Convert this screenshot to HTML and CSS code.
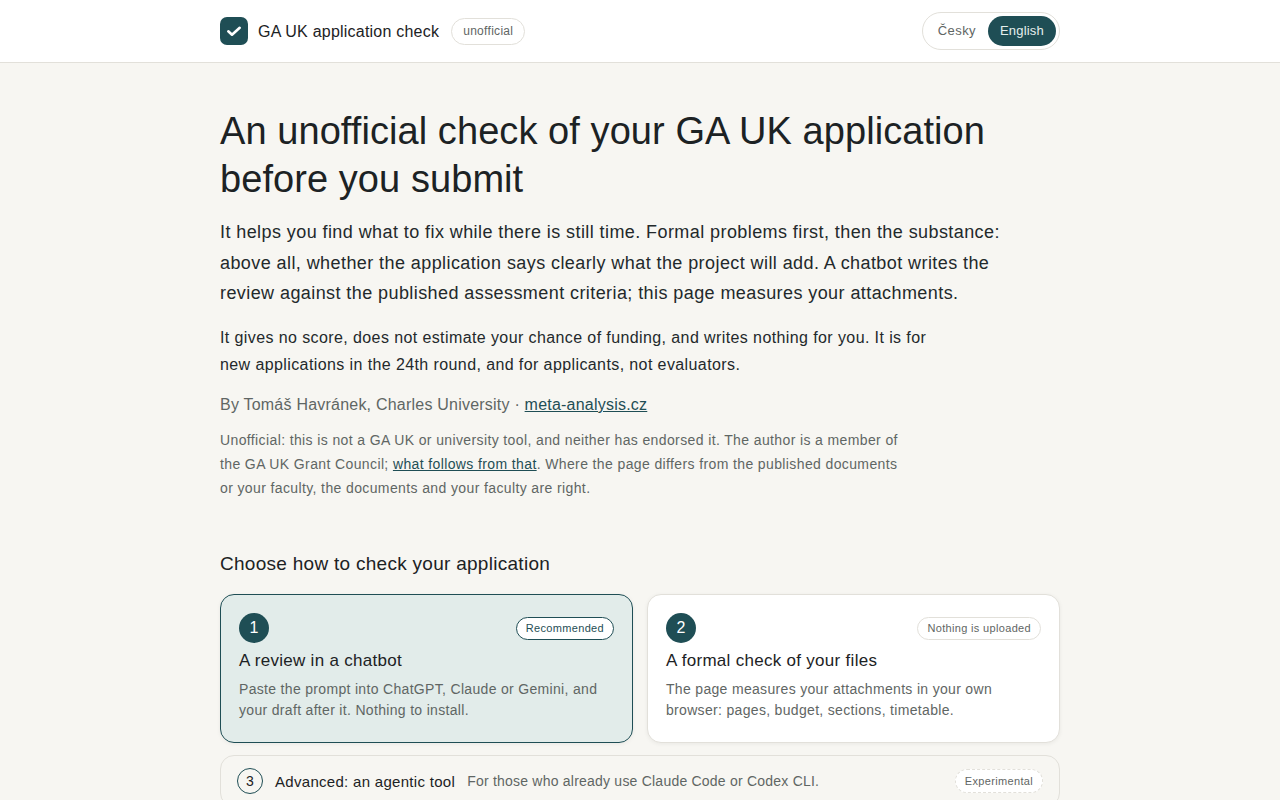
FILE: index.html
```html
<!DOCTYPE html>
<html lang="en">
<head>
    <meta charset="UTF-8">
    <meta name="viewport" content="width=device-width, initial-scale=1.0">
    <title>GA UK application check</title>
    <link rel="stylesheet" href="styles.css">
</head>
<body>
    <header class="topbar">
        <div class="topbar-inner">
            <div class="brand">
                <span class="brand-mark">
                    <svg width="16" height="16" viewBox="0 0 16 16" fill="none" stroke="#fff" stroke-width="2.6" stroke-linecap="round" stroke-linejoin="round"><path d="M2.3 8.3L6 11.7l7.7-6.9"/></svg>
                </span>
                <span class="brand-name">GA UK application check</span>
                <span class="pill">unofficial</span>
            </div>
            <div class="lang">
                <span class="lang-item">Česky</span>
                <span class="lang-item active">English</span>
            </div>
        </div>
    </header>
    <main class="container">
        <h1>An unofficial check of your GA UK application before you submit</h1>
        <p class="lead">It helps you find what to fix while there is still time. Formal problems first, then the substance: above all, whether the application says clearly what the project will add. A chatbot writes the review against the published assessment criteria; this page measures your attachments.</p>
        <p class="scope">It gives no score, does not estimate your chance of funding, and writes nothing for you. It is for new applications in the 24th round, and for applicants, not evaluators.</p>
        <p class="byline">By Tomáš Havránek, Charles University · <a href="#">meta-analysis.cz</a></p>
        <p class="note">Unofficial: this is not a GA UK or university tool, and neither has endorsed it. The author is a member of the GA UK Grant Council; <a href="#">what follows from that</a>. Where the page differs from the published documents or your faculty, the documents and your faculty are right.</p>
        <h2>Choose how to check your application</h2>
        <div class="cards">
            <div class="card selected">
                <div class="card-top">
                    <span class="num">1</span>
                    <span class="tag tag-strong">Recommended</span>
                </div>
                <h3>A review in a chatbot</h3>
                <p>Paste the prompt into ChatGPT, Claude or Gemini, and your draft after it. Nothing to install.</p>
            </div>
            <div class="card">
                <div class="card-top">
                    <span class="num">2</span>
                    <span class="tag">Nothing is uploaded</span>
                </div>
                <h3>A formal check of your files</h3>
                <p>The page measures your attachments in your own browser: pages, budget, sections, timetable.</p>
            </div>
        </div>
        <div class="advanced">
            <span class="num-small">3</span>
            <span class="advanced-title">Advanced: an agentic tool</span>
            <span class="advanced-text">For those who already use Claude Code or Codex CLI.</span>
            <span class="tag tag-dashed">Experimental</span>
        </div>
    </main>
</body>
</html>
```
FILE: styles.css
```css
:root {
    --accent: #1f4e55;
    --background: #f7f6f2;
    --text: #1c2224;
    --muted: #5f6664;
    --border: #e2e0da;
}
* {
    box-sizing: border-box;
}
body {
    margin: 0;
    background-color: var(--background);
    color: var(--text);
    font-family: "Liberation Sans", Arial, sans-serif;
    height: 800px;
    overflow: hidden;
}
a {
    color: var(--accent);
    text-decoration: underline;
}
.topbar {
    background-color: #fff;
    border-bottom: 1px solid var(--border);
    height: 63px;
}
.topbar-inner {
    width: 840px;
    height: 62px;
    margin: 0 auto;
    display: flex;
    align-items: center;
    justify-content: space-between;
}
.brand {
    display: flex;
    align-items: center;
}
.brand-mark {
    width: 28px;
    height: 28px;
    border-radius: 7px;
    background-color: var(--accent);
    display: flex;
    align-items: center;
    justify-content: center;
    margin-right: 10px;
}
.brand-name {
    font-size: 16px;
    letter-spacing: 0.22px;
    padding-top: 1px;
    margin-right: 12px;
}
.pill {
    font-size: 12px;
    letter-spacing: 0.3px;
    color: var(--muted);
    border: 1px solid var(--border);
    border-radius: 14px;
    padding: 5px 11px;
    line-height: 15px;
}
.lang {
    display: flex;
    align-items: center;
    border: 1px solid var(--border);
    border-radius: 20px;
    padding: 3px;
    height: 38px;
}
.lang-item {
    font-size: 13px;
    letter-spacing: 0.4px;
    color: var(--muted);
    padding: 0 12px;
    height: 30px;
    line-height: 29px;
    border-radius: 15px;
}
.lang-item.active {
    background-color: var(--accent);
    color: #e6efee;
    letter-spacing: 0.2px;
}
.container {
    width: 840px;
    margin: 0 auto;
    padding-top: 44px;
}
h1 {
    font-weight: 400;
    font-size: 38px;
    letter-spacing: 0.07px;
    line-height: 48px;
    margin: 0 0 14px;
}
.lead {
    font-size: 18px;
    letter-spacing: 0.42px;
    line-height: 30.5px;
    margin: 0 0 15.5px;
    max-width: 800px;
    color: #23292b;
}
.scope {
    font-size: 16px;
    letter-spacing: 0.4px;
    line-height: 27px;
    margin: 0 0 14px;
    max-width: 720px;
    color: #23292b;
}
.byline {
    font-size: 16px;
    letter-spacing: 0.22px;
    line-height: 26px;
    color: var(--muted);
    margin: 0 0 10px;
}
.note {
    font-size: 14px;
    letter-spacing: 0.38px;
    line-height: 24px;
    color: var(--muted);
    margin: 0 0 49px;
    max-width: 690px;
}
h2 {
    font-weight: 400;
    font-size: 19px;
    letter-spacing: 0.28px;
    line-height: 30px;
    margin: 0 0 15px;
}
.cards {
    display: grid;
    grid-template-columns: 1fr 1fr;
    gap: 14px;
    margin-bottom: 12px;
}
.card {
    background-color: #fff;
    border: 1px solid var(--border);
    border-radius: 14px;
    padding: 18px 18px 21px;
    box-shadow: 0 1px 4px rgba(0, 0, 0, 0.06);
}
.card.selected {
    background-color: #e2ecea;
    border-color: var(--accent);
}
.card-top {
    display: flex;
    align-items: center;
    justify-content: space-between;
    margin-bottom: 4px;
}
.num {
    width: 30px;
    height: 30px;
    border-radius: 50%;
    background-color: var(--accent);
    color: #fff;
    font-size: 16px;
    display: flex;
    align-items: center;
    justify-content: center;
}
.tag {
    font-size: 11px;
    letter-spacing: 0.33px;
    line-height: 15px;
    color: var(--muted);
    background-color: #fff;
    border: 1px solid var(--border);
    border-radius: 12px;
    padding: 3px 9px;
}
.tag-strong {
    color: var(--accent);
    border-color: var(--accent);
}
.tag-dashed {
    border-style: dashed;
    margin-left: auto;
    padding: 3.5px 9px;
}
h3 {
    font-weight: 400;
    font-size: 17px;
    letter-spacing: 0.29px;
    line-height: 27px;
    margin: 0 0 5px;
}
.card p {
    font-size: 14px;
    letter-spacing: 0.32px;
    line-height: 21px;
    color: var(--muted);
    margin: 0;
}
.advanced {
    display: flex;
    align-items: center;
    border: 1px solid var(--border);
    border-radius: 14px;
    padding: 0 16px;
    height: 52px;
}
.num-small {
    width: 26px;
    height: 26px;
    border: 1px solid var(--accent);
    border-radius: 50%;
    font-size: 14px;
    display: flex;
    align-items: center;
    justify-content: center;
    margin-right: 12px;
}
.advanced-title {
    font-size: 15px;
    letter-spacing: 0.3px;
    margin-right: 12px;
}
.advanced-text {
    font-size: 14px;
    letter-spacing: 0.22px;
    color: var(--muted);
}
```
